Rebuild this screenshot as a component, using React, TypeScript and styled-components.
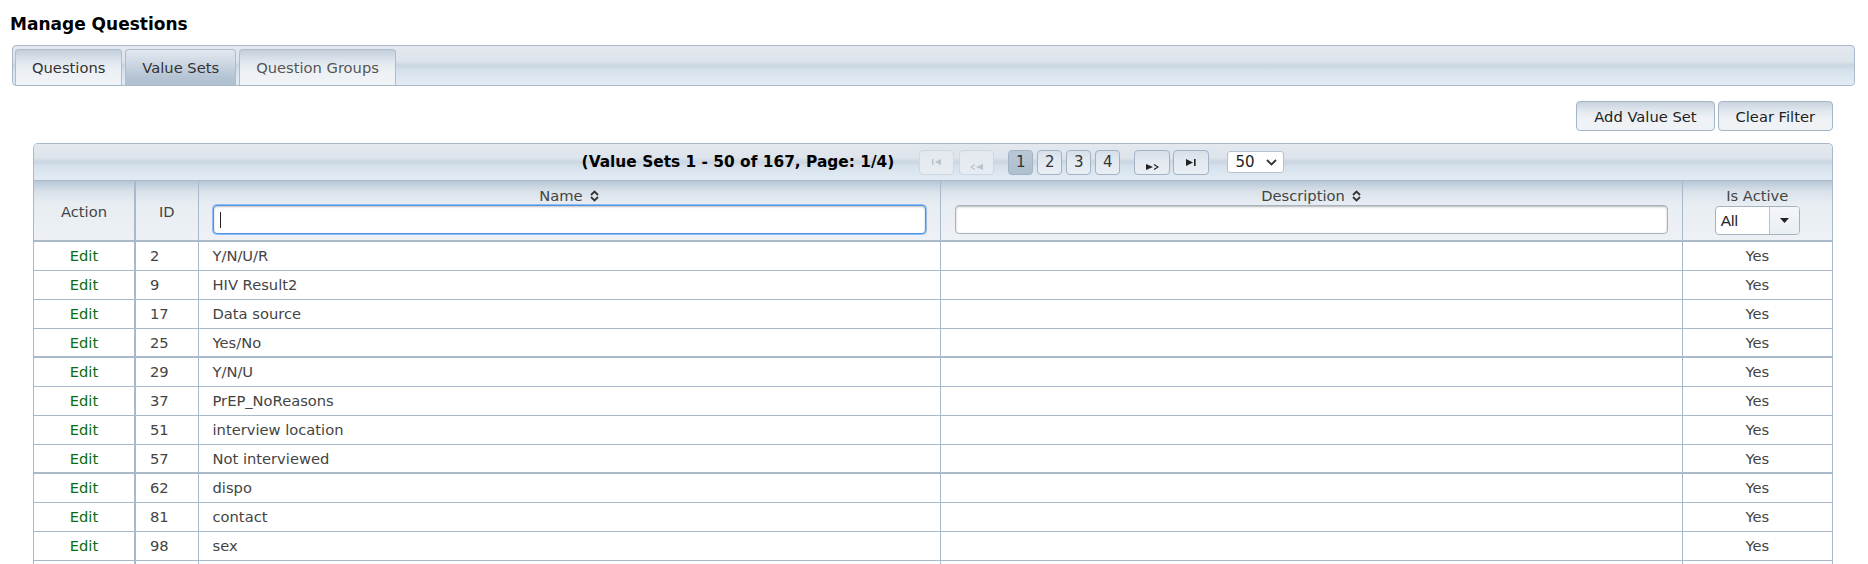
import * as React from 'react'
import styled, { createGlobalStyle } from 'styled-components'

const GlobalStyle = createGlobalStyle`
  html, body {
    margin: 0;
    padding: 0;
    background: #fff;
  }
  body {
    font-family: 'DejaVu Sans', Verdana, sans-serif;
    font-size: 14.7px;
    color: #333;
  }
`

const borderColor = '#a9b9ca'

const gloss = `linear-gradient(to bottom, #e3e8ef 0%, #dee4eb 38%, #c9d5e1 50%, #d6e1eb 62%, #e3ecf5 100%)`

const Page = styled.div`
  width: 1868px;
  box-sizing: border-box;
  padding: 12px 0 0 10px;
`

const Title = styled.h1`
  margin: 0;
  font-size: 17px;
  line-height: 24px;
  font-weight: bold;
  color: #000;
`

const TabBar = styled.div`
  margin: 9px 13px 0 2px;
  height: 41px;
  box-sizing: border-box;
  padding: 4px 0 0 2px;
  display: flex;
  align-items: flex-end;
  gap: 3px;
  border: 1px solid ${borderColor};
  border-radius: 4px;
  background: ${gloss};
`

const Tab = styled.div<{ $active?: boolean; $muted?: boolean }>`
  height: 36px;
  box-sizing: border-box;
  padding: 0 16px;
  display: flex;
  align-items: center;
  border: 1px solid #aebdcc;
  border-bottom: none;
  border-radius: 4px 4px 0 0;
  color: ${(p) => (p.$muted ? '#555' : '#333')};
  background: ${(p) =>
    p.$active
      ? 'linear-gradient(to bottom, #e2e8ef 0%, #cfd9e4 35%, #b6c5d4 75%, #afc0d0 100%)'
      : 'linear-gradient(to bottom, #c3cfdc 0%, #dde4ec 30%, #ecf0f4 55%, #f0f3f6 100%)'};
`

const Content = styled.div`
  margin: 15px 35px 0 23px;
`

const Toolbar = styled.div`
  display: flex;
  justify-content: flex-end;
  gap: 3px;
  margin-bottom: 12px;
`

const ActionButton = styled.button`
  height: 30px;
  padding: 0 17px;
  font-family: inherit;
  font-size: 14.7px;
  color: #222;
  border: 1px solid #a4b5c7;
  border-radius: 4px;
  background: linear-gradient(to bottom, #c8d3df 0%, #e3e9ef 35%, #eef2f6 60%, #eff3f6 100%);
`

const Frame = styled.div`
  border: 1px solid ${borderColor};
  border-bottom: none;
  border-radius: 5px 5px 0 0;
  overflow: hidden;
`

const Caption = styled.div`
  height: 36px;
  border-bottom: 1px solid ${borderColor};
  background: ${gloss};
  display: flex;
  align-items: center;
  justify-content: center;
`

const CaptionText = styled.span`
  font-weight: bold;
  font-size: 15.4px;
  color: #000;
  margin-right: 25px;
`

const PagerButton = styled.div<{ $disabled?: boolean; $active?: boolean; $w?: number; $gap?: number }>`
  width: ${(p) => p.$w ?? 25}px;
  height: 25px;
  box-sizing: border-box;
  margin-left: ${(p) => p.$gap ?? 4}px;
  display: flex;
  align-items: center;
  justify-content: center;
  font-size: 15px;
  color: #333;
  border: 1px solid ${(p) => (p.$disabled ? '#cdd8e3' : '#a2b3c5')};
  border-radius: 4px;
  background: ${(p) =>
    p.$active
      ? 'linear-gradient(to bottom, #b9c7d5 0%, #aebfcf 100%)'
      : p.$disabled
      ? 'linear-gradient(to bottom, #e3e9ef 0%, #e6ecf2 100%)'
      : 'linear-gradient(to bottom, #d7e0ea 0%, #e4eaf1 50%, #e9eef3 100%)'};
`

const PageSize = styled.div`
  margin-left: 18px;
  width: 57px;
  height: 22px;
  box-sizing: border-box;
  display: flex;
  align-items: center;
  justify-content: space-between;
  padding: 0 6px 0 7px;
  background: #fff;
  border: 1px solid #b4c2d0;
  border-radius: 3px;
  font-size: 15px;
  color: #222;
`

const Table = styled.table`
  width: 100%;
  border-collapse: collapse;
  table-layout: fixed;
`

const HeadCell = styled.th<{ $thick?: boolean }>`
  height: 57px;
  padding: 7px 14px 5px;
  box-sizing: border-box;
  vertical-align: ${(p) => (p.$thick !== undefined ? 'middle' : 'top')};
  font-weight: normal;
  color: #444;
  text-align: center;
  border-left: ${(p) => (p.$thick ? 2 : 1)}px solid ${borderColor};
  border-bottom: 2px solid ${borderColor};
  background: linear-gradient(to bottom, #b8c7d6 0%, #d9e2ea 18%, #e8edf2 40%, #edf1f5 100%);
  &:first-child {
    border-left: none;
  }
`

const HeadLabel = styled.div`
  height: 16px;
  line-height: 16px;
  margin-bottom: 1px;
  display: flex;
  justify-content: center;
  align-items: center;
  gap: 7px;
  white-space: nowrap;
`

const InputWrap = styled.div`
  position: relative;
`

const FilterInput = styled.input<{ $focused?: boolean }>`
  display: block;
  width: 100%;
  height: 29px;
  box-sizing: border-box;
  border: 1px solid ${(p) => (p.$focused ? '#4f94e6' : '#a5b3c1')};
  border-radius: 4px;
  background: #fff;
  box-shadow: ${(p) =>
    p.$focused
      ? '0 0 0 1px #8dbcf2, inset 0 1px 2px rgba(0,0,0,0.25)'
      : 'inset 0 1px 2px rgba(0,0,0,0.3)'};
  outline: none;
`

const Caret = styled.span`
  position: absolute;
  left: 7px;
  top: 7px;
  width: 1px;
  height: 16px;
  background: #222;
`

const ActiveSelect = styled.div`
  margin: 2px auto 0;
  width: 85px;
  height: 29px;
  box-sizing: border-box;
  display: flex;
  border: 1px solid #a5b3c1;
  border-radius: 4px;
  overflow: hidden;
  background: #fff;
  text-align: left;
`

const SelectValue = styled.span`
  flex: 1;
  padding-left: 5px;
  line-height: 27px;
  font-family: 'Liberation Sans', Arial, sans-serif;
  font-size: 15.5px;
  color: #222;
`

const SelectArrow = styled.span`
  width: 29px;
  border-left: 1px solid #b6c3d0;
  display: flex;
  align-items: center;
  justify-content: center;
  background: linear-gradient(to bottom, #f4f6f9 0%, #e9eef3 100%);
`

const Row = styled.tr<{ $thick?: boolean }>`
  & > td {
    border-bottom: ${(p) => (p.$thick ? 2 : 1)}px solid ${borderColor};
  }
`

const Cell = styled.td<{ $align?: 'left' | 'center'; $thick?: boolean }>`
  height: 29px;
  padding: 0 14px;
  box-sizing: border-box;
  text-align: ${(p) => p.$align ?? 'left'};
  color: #444;
  white-space: nowrap;
  border-left: ${(p) => (p.$thick ? 2 : 1)}px solid ${borderColor};
  &:first-child {
    border-left: none;
  }
`

const EditLink = styled.a`
  color: #0b6e0b;
  text-decoration: none;
`

const SortIcon = () => (
  <svg width="9" height="12" viewBox="0 0 9 12">
    <polyline points="1,5 4.5,1.6 8,5" fill="none" stroke="#333" strokeWidth="1.8" />
    <polyline points="1,7 4.5,10.4 8,7" fill="none" stroke="#333" strokeWidth="1.8" />
  </svg>
)

const FirstIcon = ({ color }: { color: string }) => (
  <svg width="9" height="6" viewBox="0 0 9 6">
    <rect x="0" y="0" width="1.5" height="6" fill={color} />
    <polygon points="9,0 3,3 9,6" fill={color} />
  </svg>
)

const PrevIcon = ({ color }: { color: string }) => (
  <svg width="14" height="6" viewBox="0 0 14 6" style={{ marginTop: 9 }}>
    <polyline points="5,0.5 1,3 5,5.5" fill="none" stroke={color} strokeWidth="1.2" />
    <polygon points="13,0 6,3 13,6" fill={color} />
  </svg>
)

const NextIcon = ({ color }: { color: string }) => (
  <svg width="14" height="6" viewBox="0 0 14 6" style={{ marginTop: 9 }}>
    <polygon points="1,0 8,3 1,6" fill={color} />
    <polyline points="9,0.5 13,3 9,5.5" fill="none" stroke={color} strokeWidth="1.2" />
  </svg>
)

const LastIcon = ({ color }: { color: string }) => (
  <svg width="10" height="7" viewBox="0 0 10 7">
    <polygon points="0,0 7,3.5 0,7" fill={color} />
    <rect x="8" y="0" width="1.6" height="7" fill={color} />
  </svg>
)

const rows: [number, string][] = [
  [2, 'Y/N/U/R'],
  [9, 'HIV Result2'],
  [17, 'Data source'],
  [25, 'Yes/No'],
  [29, 'Y/N/U'],
  [37, 'PrEP_NoReasons'],
  [51, 'interview location'],
  [57, 'Not interviewed'],
  [62, 'dispo'],
  [81, 'contact'],
  [98, 'sex'],
]

export default function App() {
  return (
    <Page>
      <GlobalStyle />
      <Title>Manage Questions</Title>
      <TabBar>
        <Tab>Questions</Tab>
        <Tab $active>Value Sets</Tab>
        <Tab $muted>Question Groups</Tab>
      </TabBar>
      <Content>
        <Toolbar>
          <ActionButton>Add Value Set</ActionButton>
          <ActionButton>Clear Filter</ActionButton>
        </Toolbar>
        <Frame>
          <Caption>
            <CaptionText>(Value Sets 1 - 50 of 167, Page: 1/4)</CaptionText>
            <PagerButton $disabled $w={35} $gap={0}>
              <FirstIcon color="#b8c3ce" />
            </PagerButton>
            <PagerButton $disabled $w={35} $gap={5}>
              <PrevIcon color="#b8c3ce" />
            </PagerButton>
            <PagerButton $active $gap={14}>1</PagerButton>
            <PagerButton>2</PagerButton>
            <PagerButton>3</PagerButton>
            <PagerButton>4</PagerButton>
            <PagerButton $w={36} $gap={14}>
              <NextIcon color="#222" />
            </PagerButton>
            <PagerButton $w={36} $gap={3}>
              <LastIcon color="#222" />
            </PagerButton>
            <PageSize>
              <span>50</span>
              <svg width="11" height="7" viewBox="0 0 11 7">
                <polyline points="1,1 5.5,5.5 10,1" fill="none" stroke="#333" strokeWidth="1.8" />
              </svg>
            </PageSize>
          </Caption>
          <Table>
            <colgroup>
              <col style={{ width: 101 }} />
              <col style={{ width: 63 }} />
              <col style={{ width: 742 }} />
              <col style={{ width: 742 }} />
              <col style={{ width: 150 }} />
            </colgroup>
            <thead>
              <tr>
                <HeadCell $thick={false}>Action</HeadCell>
                <HeadCell $thick>ID</HeadCell>
                <HeadCell>
                  <HeadLabel>
                    Name <SortIcon />
                  </HeadLabel>
                  <InputWrap>
                    <FilterInput $focused />
                    <Caret />
                  </InputWrap>
                </HeadCell>
                <HeadCell>
                  <HeadLabel>
                    Description <SortIcon />
                  </HeadLabel>
                  <FilterInput />
                </HeadCell>
                <HeadCell>
                  <HeadLabel>Is Active</HeadLabel>
                  <ActiveSelect>
                    <SelectValue>All</SelectValue>
                    <SelectArrow>
                      <svg width="9" height="5" viewBox="0 0 9 5">
                        <polygon points="0,0 9,0 4.5,5" fill="#222" />
                      </svg>
                    </SelectArrow>
                  </ActiveSelect>
                </HeadCell>
              </tr>
            </thead>
            <tbody>
              {rows.map(([id, name], i) => (
                <Row key={id} $thick={i === 3 || i === 7}>
                  <Cell $align="center">
                    <EditLink href="#">Edit</EditLink>
                  </Cell>
                  <Cell $thick>{id}</Cell>
                  <Cell>{name}</Cell>
                  <Cell />
                  <Cell $align="center">Yes</Cell>
                </Row>
              ))}
              <Row>
                <Cell />
                <Cell $thick />
                <Cell />
                <Cell />
                <Cell />
              </Row>
            </tbody>
          </Table>
        </Frame>
      </Content>
    </Page>
  )
}
